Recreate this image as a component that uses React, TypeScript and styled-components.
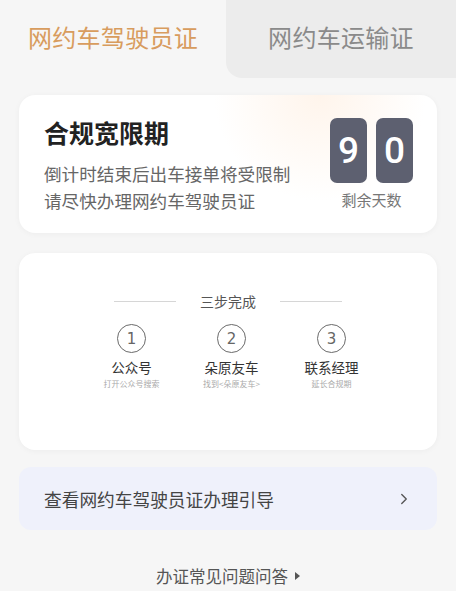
import React from "react";
import styled, { createGlobalStyle } from "styled-components";
import { ChevronRight } from "lucide-react";

const GlobalStyle = createGlobalStyle`
	html, body {
		margin: 0;
		padding: 0;
		background: #f6f6f6;
		font-family: "Noto Sans CJK SC", "Noto Sans", sans-serif;
	}
`;

const Page = styled.div`
	width: 456px;
	min-height: 591px;
	background: #f6f6f6;
	overflow: hidden;
`;

const TabBar = styled.div`
	display: flex;
	height: 78px;
`;

const Tab = styled.div<{ $active?: boolean }>`
	flex: 0 0 ${(p) => (p.$active ? "226px" : "230px")};
	display: flex;
	align-items: center;
	justify-content: center;
	padding-bottom: 6px;
	box-sizing: border-box;
	font-size: 24px;
	letter-spacing: 0.3px;
	color: ${(p) => (p.$active ? "#d89c5e" : "#8a8a8a")};
	background: ${(p) => (p.$active ? "transparent" : "#ececec")};
	border-bottom-left-radius: ${(p) => (p.$active ? "0" : "16px")};
`;

const Card = styled.div`
	margin: 0 19px;
	background: #fff;
	border-radius: 16px;
	box-shadow: 0 1px 6px rgba(0, 0, 0, 0.04);
`;

const GraceCard = styled(Card)`
	margin-top: 17px;
	height: 138px;
	box-sizing: border-box;
	padding: 19px 24px 0 25px;
	display: flex;
	justify-content: space-between;
	background: radial-gradient(circle at 72% 0%, rgba(255, 232, 212, 0.45), rgba(255, 255, 255, 0) 32%),
		#fff;
`;

const GraceText = styled.div`
	display: flex;
	flex-direction: column;
`;

const GraceTitle = styled.div`
	font-size: 25px;
	font-weight: 700;
	line-height: 36px;
	color: #222;
`;

const GraceDesc = styled.div`
	margin-top: 10px;
	font-size: 17.6px;
	line-height: 27px;
	color: #666;
`;

const Counter = styled.div`
	display: flex;
	flex-direction: column;
	align-items: center;
	padding-top: 4px;
`;

const Digits = styled.div`
	display: flex;
	gap: 9px;
`;

const Digit = styled.div`
	width: 37px;
	height: 65px;
	border-radius: 7px;
	background: #5d6070;
	color: #fff;
	font-family: Roboto, "Liberation Sans", sans-serif;
	font-weight: 500;
	font-size: 37px;
	display: flex;
	align-items: center;
	justify-content: center;
`;

const CounterLabel = styled.div`
	margin-top: 7px;
	font-size: 15px;
	line-height: 20px;
	color: #777;
`;

const StepsCard = styled(Card)`
	margin-top: 20px;
	height: 197px;
	box-sizing: border-box;
	padding-top: 38px;
`;

const StepsHeader = styled.div`
	display: flex;
	align-items: center;
	justify-content: center;
	gap: 24px;
	font-size: 14px;
	line-height: 20px;
	color: #555;
`;

const Rule = styled.div`
	width: 62px;
	height: 1px;
	background: #d6d6d6;
`;

const Steps = styled.div`
	margin-top: 13px;
	padding-left: 7px;
	display: grid;
	grid-template-columns: repeat(3, 100px);
	justify-content: center;
`;

const Step = styled.div`
	display: flex;
	flex-direction: column;
	align-items: center;
`;

const StepNum = styled.div`
	width: 27px;
	height: 27px;
	border: 1.5px solid #6a6a6a;
	border-radius: 50%;
	display: flex;
	align-items: center;
	justify-content: center;
	font-family: "DejaVu Sans", sans-serif;
	font-size: 15px;
	color: #666;
`;

const StepName = styled.div`
	margin-top: 5px;
	font-size: 13.5px;
	line-height: 19px;
	color: #333;
`;

const StepHint = styled.div`
	font-size: 8px;
	line-height: 14px;
	color: #aaa;
`;

const GuideRow = styled.div`
	margin: 17px 19px 0;
	height: 63px;
	border-radius: 12px;
	background: #eff1fb;
	display: flex;
	align-items: center;
	justify-content: space-between;
	padding: 0 24px 0 25px;
	font-size: 17.7px;
	color: #444;
`;

const Faq = styled.div`
	margin-top: 35px;
	display: flex;
	align-items: center;
	justify-content: center;
	gap: 7px;
	font-size: 16.5px;
	line-height: 22px;
	color: #555;
`;

const Arrow = styled.span`
	width: 0;
	height: 0;
	border-left: 5px solid #555;
	border-top: 4px solid transparent;
	border-bottom: 4px solid transparent;
`;

const steps = [
	{ n: 1, name: "公众号", hint: "打开公众号搜索" },
	{ n: 2, name: "朵原友车", hint: "找到<朵原友车>" },
	{ n: 3, name: "联系经理", hint: "延长合规期" },
];

export default function App() {
	return (
		<Page>
			<GlobalStyle />
			<TabBar>
				<Tab $active>网约车驾驶员证</Tab>
				<Tab>网约车运输证</Tab>
			</TabBar>

			<GraceCard>
				<GraceText>
					<GraceTitle>合规宽限期</GraceTitle>
					<GraceDesc>
						倒计时结束后出车接单将受限制
						<br />
						请尽快办理网约车驾驶员证
					</GraceDesc>
				</GraceText>
				<Counter>
					<Digits>
						<Digit>9</Digit>
						<Digit>0</Digit>
					</Digits>
					<CounterLabel>剩余天数</CounterLabel>
				</Counter>
			</GraceCard>

			<StepsCard>
				<StepsHeader>
					<Rule />
					三步完成
					<Rule />
				</StepsHeader>
				<Steps>
					{steps.map((s) => (
						<Step key={s.n}>
							<StepNum>{s.n}</StepNum>
							<StepName>{s.name}</StepName>
							<StepHint>{s.hint}</StepHint>
						</Step>
					))}
				</Steps>
			</StepsCard>

			<GuideRow>
				查看网约车驾驶员证办理引导
				<ChevronRight size={18} color="#555" strokeWidth={1.8} />
			</GuideRow>

			<Faq>
				办证常见问题问答
				<Arrow />
			</Faq>
		</Page>
	);
}
